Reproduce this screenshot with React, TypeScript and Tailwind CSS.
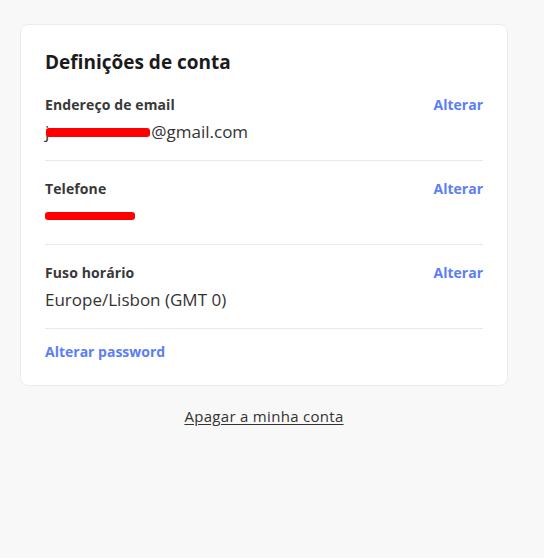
import React from "react";

function Row({
  label,
  children,
  first,
}: {
  label: string;
  children: React.ReactNode;
  first?: boolean;
}) {
  return (
    <div className={`border-b border-[#e8e9ee] pb-4 ${first ? "" : "pt-[17px]"}`}>
      <div className="flex items-center justify-between h-5">
        <span className="text-[14px] font-bold text-[#383838] tracking-[0.1px]">{label}</span>
        <button className="text-[14px] font-bold text-[#5b7ef7]">Alterar</button>
      </div>
      <div className="mt-[6px] h-6 flex items-center text-[17px] text-[#333]">{children}</div>
    </div>
  );
}

export default function App() {
  return (
    <div
      className="min-h-[558px] w-full bg-[#f8f8f8] pt-6 pl-5"
      style={{ fontFamily: "'Open Sans', 'Noto Sans', sans-serif" }}
    >
      <div className="w-[488px]">
        <div className="rounded-lg border border-[#ececec] bg-white px-6 pt-[23px] pb-[23px]">
          <h1 className="h-7 flex items-center text-[19px] font-bold text-[#1b1b1b]">
            Definições de conta
          </h1>
          <div className="mt-[18px]">
            <Row label="Endereço de email" first>
              <span className="relative inline-flex items-center">
                <span>j</span>
                <span className="inline-block h-[9px] w-[104px] -ml-[3px] mr-[1px] rounded-[3px] bg-[#ff0000]" />
                <span>@gmail.com</span>
              </span>
            </Row>
            <Row label="Telefone">
              <span className="inline-block h-[8px] w-[90px] rounded-[3px] bg-[#ff0000]" />
            </Row>
            <Row label="Fuso horário">Europe/Lisbon (GMT 0)</Row>
          </div>
          <div className="pt-[13px]">
            <button className="block text-[14px] font-bold text-[#5b7ef7] leading-5">
              Alterar password
            </button>
          </div>
        </div>
        <div className="mt-[20px] flex justify-center">
          <button className="text-[15px] leading-5 tracking-[0.3px] text-[#333] underline underline-offset-2">
            Apagar a minha conta
          </button>
        </div>
      </div>
    </div>
  );
}
